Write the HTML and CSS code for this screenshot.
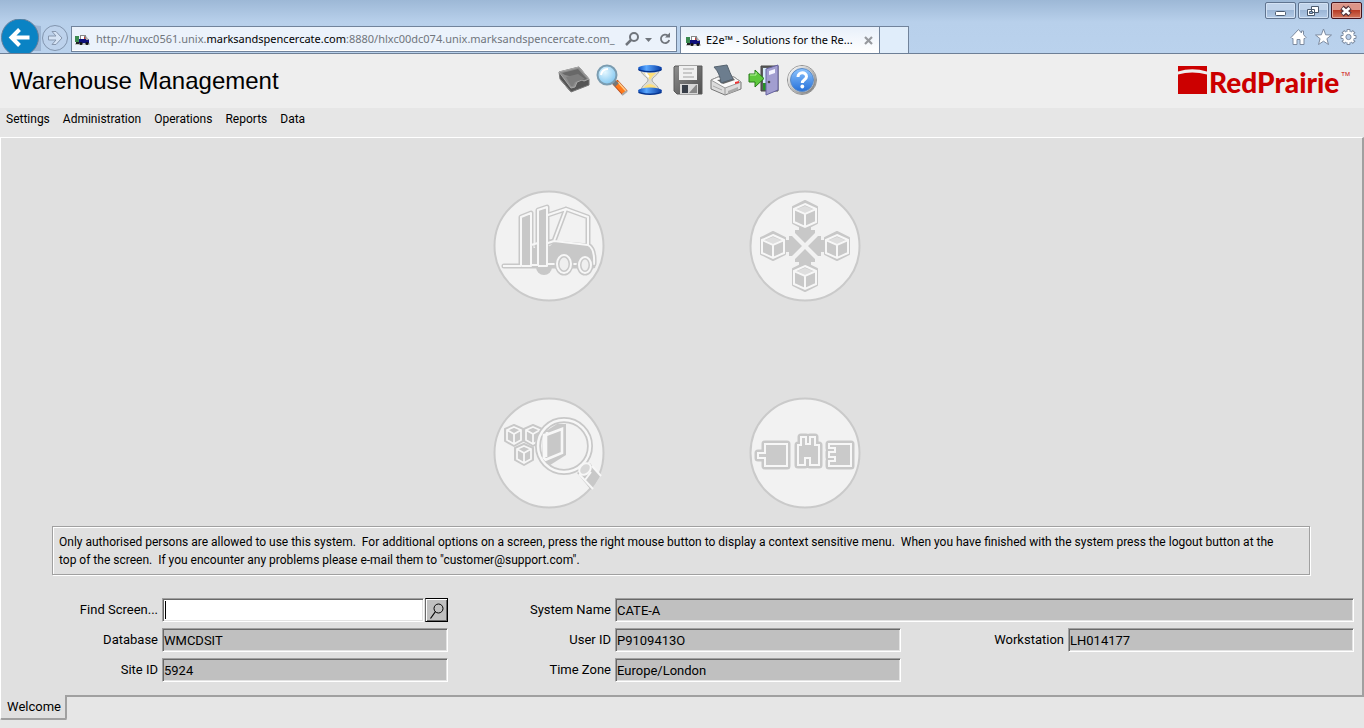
FILE: index.html
```html
<!DOCTYPE html>
<html lang="en">
<head>
<meta charset="utf-8">
<title>Warehouse Management</title>
<link rel="stylesheet" href="styles.css">
</head>
<body>
<svg class="defs" width="0" height="0" aria-hidden="true">
  <defs>
    <linearGradient id="blue" x1="0" y1="0" x2="0" y2="1"><stop offset="0" stop-color="#8cc4ff"/><stop offset="1" stop-color="#2670d8"/></linearGradient>
    <linearGradient id="cap" x1="0" y1="0" x2="1" y2="0"><stop offset="0" stop-color="#0a4ec0"/><stop offset=".35" stop-color="#5aa8ff"/><stop offset="1" stop-color="#0538a0"/></linearGradient>
    <linearGradient id="grey" x1="0" y1="0" x2="1" y2="1"><stop offset="0" stop-color="#8e8e8e"/><stop offset="1" stop-color="#4e4e4e"/></linearGradient>
    <linearGradient id="silver" x1="0" y1="0" x2="1" y2="1"><stop offset="0" stop-color="#fff"/><stop offset="1" stop-color="#777"/></linearGradient>
    <radialGradient id="lens" cx=".4" cy=".35" r=".7"><stop offset="0" stop-color="#e4f7ff"/><stop offset="1" stop-color="#7cc4f0"/></radialGradient>
    <g id="truck">
      <path d="M0 2h4v6H0z" fill="#3c8a50"/><path d="M0 10h15" stroke="#999"/><path d="M5 1h6v5H5z" fill="#888"/><path d="M6 2h3v3H6z" fill="#fff"/><path d="M9 3h1v3H9z" fill="#c33"/><path d="M4 5h10v4H4z" fill="#10107c"/><path d="M11 2l3 4h-3z" fill="#aaa"/>
      <circle cx="6" cy="9.500" r="1.600" fill="#111"/><circle cx="12" cy="9.500" r="1.600" fill="#111"/><path d="M1 8h3v2H1z" fill="#222"/>
    </g>
    <g id="cube">
      <path d="M0-14L12-8V8L0 14-12 8V-8z" fill="#c8c8c8" stroke="#c8c8c8" stroke-width="2" stroke-linejoin="round"/>
      <path d="M0-9L8-6 0-2-8-6z" fill="#dedede"/>
      <path d="M0-11L11-6V7L0 12-11 7V-6zM-11-6L0-1 11-6M0-1V12" fill="none" stroke="#f7f7f7" stroke-width="2"/>
    </g>
    <g id="smallcube">
      <path d="M0-10L9-6V6L0 11-9 6V-6z" fill="#c8c8c8" stroke="#c8c8c8" stroke-width="2" stroke-linejoin="round"/>
      <path d="M0-8L7-5V5L0 9-7 5V-5zM-7-5L0-1 7-5M0-1V9" fill="none" stroke="#f7f7f7" stroke-width="1.800"/>
    </g>
  </defs>
</svg>

<header class="chrome">
  <div class="window-controls">
    <button class="win" aria-label="Minimise"><svg width="28" height="16"><rect x="9.500" y="8.500" width="10" height="4" rx="1" fill="#fff" stroke="#4b5a6e"/></svg></button>
    <button class="win" aria-label="Restore"><svg width="28" height="16"><path d="M12.500 3.500h7v6h-7zM8.500 6.500h7v6h-7z" fill="#fff" stroke="#4b5a6e"/><path d="M10.500 8.500h3v2h-3z" fill="#8fb0d8" stroke="#4b5a6e"/></svg></button>
    <button class="win close" aria-label="Close"><svg width="28" height="16"><path d="M10 4.500l8 7M18 4.500l-8 7" stroke="#53343b" stroke-width="5"/><path d="M10.500 5l7 6M17.500 5l-7 6" stroke="#fff" stroke-width="2.600"/></svg></button>
  </div>
  <div class="nav">
    <button class="plain" aria-label="Back"><svg width="41" height="34"><path d="M25 0Q31 7 41 7V32H30z" fill="#9cb4d2"/><circle cx="20" cy="18.500" r="18.500" fill="#0a83c4" stroke="#67809c"/><path d="M29.500 18.500H12M19.500 10.500L11.500 18.500l8 8" fill="none" stroke="#fff" stroke-width="4"/></svg></button>
    <button class="plain" aria-label="Forward"><svg width="28" height="34"><circle cx="14" cy="19" r="12.500" fill="#bdd2ec" stroke="#8295ae"/><path d="M7.500 17h7.500l-4-4.500h4l6 6.500-6 6.500h-4l4-4.500H7.500z" fill="#d5e3f5" stroke="#8797ae"/></svg></button>
    <div class="address">
      <svg width="15" height="14"><use href="#truck" y="2"/></svg>
      <div class="url" role="textbox" contenteditable="true" spellcheck="false" aria-label="Address">http://huxc0561.unix.<span>marksandspencercate.com</span>:8880/hlxc00dc074.unix.marksandspencercate.com_</div>
      <button class="plain" aria-label="Search"><svg width="15" height="16"><circle cx="9" cy="6" r="4" fill="none" stroke="#70757c" stroke-width="2"/><path d="M6 9l-5 5" stroke="#70757c" stroke-width="2.500"/></svg></button>
      <button class="plain" aria-label="Show address list"><svg width="9" height="16"><path d="M1 7h7l-3.500 4z" fill="#70757c"/></svg></button>
      <button class="plain refresh" aria-label="Refresh"><svg width="12" height="16"><path d="M9 4.800A4.200 4.200 0 1 0 10.200 9" fill="none" stroke="#70757c" stroke-width="1.800"/><path d="M6 6.500h5V1.500z" fill="#70757c"/></svg></button>
    </div>
    <div class="page-tab">
      <svg width="15" height="14"><use href="#truck" y="2"/></svg>
      <span>E2e™ - Solutions for the Re...</span>
      <button class="plain" aria-label="Close tab"><svg width="9" height="9"><path d="M1 1l7 7M8 1L1 8" stroke="#96999e" stroke-width="2.200"/></svg></button>
    </div>
    <button class="new-tab" aria-label="New tab"></button>
    <div class="tools">
      <button class="plain" aria-label="Home"><svg width="17" height="18"><path d="M8.500 1.500l-7.500 8 1 1h1v6h4v-5h3v5h4v-6h1l1-1-2.500-3V3h-2v2z" fill="#fff" stroke="#7d8ba0"/></svg></button>
      <button class="plain" aria-label="Favourites"><svg width="17" height="18"><path d="M8.500 1l2.200 5.800 5.800.2-4.600 3.700 1.600 5.800-5-3.300-5 3.300 1.600-5.800L.500 7l5.800-.2z" fill="#fff" stroke="#7d8ba0"/></svg></button>
      <button class="plain" aria-label="Tools"><svg width="17" height="18" viewBox="-8.500 -9 17 18"><g fill="#fff" stroke="#7d8ba0"><path id="tooth" d="M-1.500-7.500h3v15h-3z"/><use href="#tooth" transform="rotate(45)"/><use href="#tooth" transform="rotate(90)"/><use href="#tooth" transform="rotate(135)"/></g><circle r="5.500" fill="#fff"/><circle r="2.600" fill="#bad0ec" stroke="#7d8ba0"/></svg></button>
    </div>
  </div>
</header>

<div class="banner">
  <h1>Warehouse Management</h1>
  <div class="toolbar">
    <button class="plain" aria-label="Tray"><svg width="32" height="32" viewBox="0 0 32 32"><path d="M1 8L21 3l10 12v6L13 28 2 15z" fill="#555" stroke="#777"/><path d="M1 8L21 3l10 12-5 2-2-1-5 2-2 5-4 1z" fill="#8d8d8d" stroke="#a8a8a8"/><path d="M4 9l16-4 9 10-3 1-9-3-6-1-4-1z" fill="#686868"/><path d="M8 13l12-3 7 5-4 1-6 2-2 4-2 0z" fill="#7d7d7d"/><path d="M2 15l11 13" stroke="#888"/></svg></button>
    <button class="plain" aria-label="Search"><svg width="32" height="32" viewBox="0 0 32 32"><path d="M19 18l10 11" stroke="#b8481c" stroke-width="7"/><path d="M19 18l10 11" stroke="#ff7a1c" stroke-width="5"/><path d="M22 18l8 9" stroke="#ffd08c" stroke-width="1.500"/><path d="M17 17l4 4" stroke="#777" stroke-width="5"/><path d="M26 31l5-4" stroke="#aaa" stroke-width="2"/><circle cx="11" cy="11" r="9.500" fill="url(#lens)" stroke="#7b9cb0" stroke-width="2"/><path d="M5 11q1-6 7-6" stroke="#fff" stroke-width="2" fill="none"/></svg></button>
    <button class="plain" aria-label="Wait"><svg width="32" height="32" viewBox="0 0 32 32"><path d="M7 6h18c0 5-7 7-7 10s7 5 7 11H7c0-6 7-8 7-11S7 11 7 6z" fill="#dedcd2" stroke="#a9a9a4"/><path d="M10 9h12q-4 3-6 7-2-4-6-7zM9 26q1-5 7-6 6 1 7 6z" fill="#ffe07a"/><path d="M12 8q0 3 3 5" stroke="#fff" stroke-width="2" fill="none"/><ellipse cx="16" cy="5.500" rx="12" ry="3" fill="#05348f"/><ellipse cx="16" cy="4" rx="12" ry="3" fill="url(#cap)"/><ellipse cx="16" cy="28" rx="12" ry="3" fill="#05348f"/><ellipse cx="16" cy="26.500" rx="12" ry="3" fill="url(#cap)"/></svg></button>
    <button class="plain" aria-label="Save"><svg width="32" height="32" viewBox="0 0 32 32"><path d="M3 2h27v28H5l-3-3V3z" fill="url(#grey)" stroke="#5b5b5b"/><path d="M7 2h18v14H7z" fill="#f0f0f0"/><path d="M11 5h11M11 9h9M11 13h11" stroke="#bcbcbc" stroke-width="1.500"/><path d="M8 20h18v10H8z" fill="#d6d6d6"/><path d="M10 21h6v8h-6z" fill="#383e48"/><path d="M17 29l7-8h1v8z" fill="#888"/></svg></button>
    <button class="plain" aria-label="Print"><svg width="32" height="32" viewBox="0 0 32 32"><path d="M1 16l7-3 16 0 7 5v7L15 31 1 25z" fill="#dcdcdc" stroke="#777"/><path d="M1 16l7-3h16l7 5-16 6z" fill="#fafafa" stroke="#999"/><path d="M7 16l16-2 2 2-12 4z" fill="#666"/><path d="M4 3l13-2q3 8 6 14l-12 4Q10 9 4 3z" fill="#6c7d8e" stroke="#56636f"/><path d="M15 24v7" stroke="#999"/><path d="M18 27l10-4v3l-10 4z" fill="#aaa"/><path d="M25 18l4-1v2l-4 1z" fill="#e33"/><path d="M3 22l9 4" stroke="#aaa"/></svg></button>
    <button class="plain" aria-label="Log out"><svg width="32" height="32" viewBox="0 0 32 32"><path d="M13 2h17v25H13z" fill="#5c5c5c" stroke="#444"/><path d="M15 4h11v15H15z" fill="#d7eefa"/><path d="M15 19h9v7h-9z" fill="#249224"/><path d="M18 5l12-4v25l-12 5z" fill="#a29ed0" stroke="#6662a0"/><path d="M21 7l6-2v4l-6 2z" fill="#f4f4ff"/><circle cx="21" cy="18" r="1.300" fill="#444"/><path d="M1 10h6V6l9 8.500-9 8.500v-5H1z" fill="#5ec83c" stroke="#267b18"/><path d="M2 11h6V8" stroke="#b5f39a" fill="none"/></svg></button>
    <button class="plain" aria-label="Help"><svg width="32" height="32" viewBox="0 0 32 32"><circle cx="16" cy="16" r="14.500" fill="#e9e9e9" stroke="#8f8f8f"/><circle cx="16" cy="16" r="13" fill="none" stroke="url(#silver)" stroke-width="2"/><circle cx="16" cy="16" r="11.500" fill="url(#blue)" stroke="#5c8ac4"/><path d="M12 13c0-5.500 8.500-5.500 8.500-.5 0 3.500-4.200 3-4.200 6.500" fill="none" stroke="#fff" stroke-width="3"/><circle cx="16.300" cy="22.500" r="1.900" fill="#fff"/></svg></button>
  </div>
  <div class="brand">
    <svg width="29" height="30"><path d="M0 0h29v5.500Q14 1 0 5.500z" fill="#c00"/><path d="M0 8.500q14-4 29 0V28H0z" fill="#c00"/></svg>
    <span class="brand-name">RedPrairie</span><span class="tm">TM</span>
  </div>
</div>

<nav class="menu">
  <button>Settings</button><button>Administration</button><button>Operations</button><button>Reports</button><button>Data</button>
</nav>

<main class="panel">
  <div class="art">
    <svg viewBox="0 0 112 112">
      <circle cx="56" cy="56" r="54.500" fill="#f2f2f2" stroke="#cacaca" stroke-width="2"/>
      <circle cx="51" cy="77" r="8" fill="#c8c8c8"/>
      <path d="M11 76h17V27l10-4v53M45 76V20l9-3v59M28 76h72M55 25l18-6 22 8v28q7 4 6 19M73 19L61 51l-17 5M61 53l34 3" fill="none" stroke="#c8c8c8" stroke-width="5" stroke-linejoin="round" stroke-linecap="round"/>
      <path d="M38 58h16l7-5 34 3q7 4 6 18H38z" fill="#c8c8c8"/>
      <path d="M28 27l10-4v53H28zM45 20l9-3v59h-9z" fill="#c8c8c8"/>
      <path d="M10 76h18V27l10-4v53h-9M38 55l7-2M38 75h7V20l9-3v59h-9M54 74h47q1-15-6-19V27l-22-8-18 6M73 19L61 51l-6 2M61 51l34 4" fill="none" stroke="#f7f7f7" stroke-width="2" stroke-linejoin="round"/>
      <g fill="#efefef" stroke="#c8c8c8" stroke-width="5"><ellipse cx="71" cy="74" rx="7" ry="9"/><ellipse cx="92" cy="75" rx="6" ry="8"/></g>
      <g fill="none" stroke="#f7f7f7" stroke-width="2"><ellipse cx="71" cy="74" rx="7" ry="9"/><ellipse cx="92" cy="75" rx="6" ry="8"/></g>
    </svg>
    <svg viewBox="0 0 112 112">
      <circle cx="56" cy="56" r="54.500" fill="#f2f2f2" stroke="#cacaca" stroke-width="2"/>
      <path id="arrow" d="M56 53l-10-10v-3h4v-5h12v5h4v3z" fill="#c8c8c8"/>
      <use href="#arrow" transform="rotate(90 56 56)"/><use href="#arrow" transform="rotate(180 56 56)"/><use href="#arrow" transform="rotate(270 56 56)"/>
      <use href="#cube" x="56" y="25"/><use href="#cube" x="24" y="56"/><use href="#cube" x="88" y="56"/><use href="#cube" x="56" y="87"/>
    </svg>
    <svg viewBox="0 0 112 112">
      <circle cx="56" cy="56" r="54.500" fill="#f2f2f2" stroke="#cacaca" stroke-width="2"/>
      <use href="#smallcube" x="21" y="38"/><use href="#smallcube" x="40" y="38"/><use href="#smallcube" x="31" y="57"/>
      <path d="M84 76l14 17 9-14-10-13z" fill="#c8c8c8"/>
      <circle cx="71" cy="49" r="26" fill="#f2f2f2" stroke="#c8c8c8" stroke-width="6"/>
      <path d="M50 36l14-9h9v31L54 70l-5-2z" fill="#c8c8c8"/>
      <circle cx="71" cy="49" r="26" fill="none" stroke="#f7f7f7" stroke-width="2.500"/>
      <path d="M51 61V38l4-1M53 60V38l16-6v24L52 63M54 37V35M50 60l3 3" fill="none" stroke="#f7f7f7" stroke-width="2.600"/>
      <path d="M86 77l14 15M99 69l9 10M92 83l6-8" stroke="#f7f7f7" stroke-width="2"/>
      <ellipse cx="92" cy="72" rx="5" ry="6.500" transform="rotate(45 92 72)" fill="#d8d8d8" stroke="#f7f7f7" stroke-width="2"/>
    </svg>
    <svg viewBox="0 0 112 112">
      <circle cx="56" cy="56" r="54.500" fill="#f2f2f2" stroke="#cacaca" stroke-width="2"/>
      <path d="M16 47h22v22H16v-8H9v-5h7zM49 48h3v-8h5v7h4v-7h5v8h4v20H61v-7h-5v7h-7zM80 47h22v22H80v-5h6v-4h-6v-5h6v-4h-6z" fill="#cacaca" stroke="#c8c8c8" stroke-width="7" stroke-linejoin="round"/>
      <path d="M16 47h22v22H16v-8H9v-5h7zM49 48h3v-8h5v7h4v-7h5v8h4v20H61v-7h-5v7h-7zM80 47h22v22H80v-5h6v-4h-6v-5h6v-4h-6z" fill="#cacaca" stroke="#f7f7f7" stroke-width="2"/>
    </svg>
  </div>

  <p class="notice">Only authorised persons are allowed to use this system.&nbsp; For additional options on a screen, press the right mouse button to display a context sensitive menu.&nbsp; When you have finished with the system press the logout button at the top of the screen.&nbsp; If you encounter any problems please e-mail them to "customer@support.com".</p>

  <form class="fields">
    <label for="find">Find Screen...</label>
    <div class="find"><input id="find" class="field editable" type="text"><button type="button" aria-label="Find"><svg width="19" height="19"><circle cx="11.500" cy="7.500" r="4.500" fill="none" stroke="#000"/><path d="M8.500 10.500l-5 7" stroke="#000" stroke-width="1.200"/></svg></button></div>
    <label for="system">System Name</label>
    <input id="system" class="field wide" type="text" value="CATE-A" readonly>
    <label for="database">Database</label>
    <input id="database" class="field" type="text" value="WMCDSIT" readonly>
    <label for="user">User ID</label>
    <input id="user" class="field" type="text" value="P9109413O" readonly>
    <label for="station">Workstation</label>
    <input id="station" class="field" type="text" value="LH014177" readonly>
    <label for="site">Site ID</label>
    <input id="site" class="field" type="text" value="5924" readonly>
    <label for="zone">Time Zone</label>
    <input id="zone" class="field" type="text" value="Europe/London" readonly>
  </form>
</main>
<footer><button class="screen-tab">Welcome</button></footer>
</body>
</html>
```
FILE: styles.css
```css
* { box-sizing: border-box; }
body {
  margin: 0;
  min-height: 100vh;
  display: flex;
  flex-direction: column;
  background: #e6e6e6;
  color: #000;
  font: 13px/18px Roboto, "Liberation Sans", Arial, sans-serif;
}
button, input { font: inherit; color: inherit; }
svg { display: block; flex: none; }
.defs { position: absolute; }
.plain { border: 0; padding: 0; background: none; }

.chrome {
  background: linear-gradient(#9db8d6, #b8d0eb 22px, #bad2ed);
  border-bottom: 1px solid #6d7f96;
  font: 11px/16px "Noto Sans", "Open Sans", sans-serif;
}
.window-controls {
  height: 18px;
  padding: 2px 2px 0 0;
  display: flex;
  justify-content: flex-end;
  gap: 2px;
}
.win {
  width: 31px;
  height: 17px;
  padding: 0;
  border: 1px solid #60748f;
  border-radius: 2px;
  box-shadow: inset 0 0 0 1px #d3e2f4;
  background: linear-gradient(#c0d3ea 50%, #9cb6d6 50%, #b2cae6);
}
.close {
  border-color: #45131c;
  box-shadow: inset 0 0 0 1px #e0a79d;
  background: linear-gradient(#dc9588 45%, #b83c26 50%, #d2765c);
}
.nav { display: flex; align-items: flex-end; height: 35px; }
.address {
  flex: 0 1 606px;
  min-width: 0;
  height: 26px;
  margin: 0 3px 1px 2px;
  padding: 0 5px 0 3px;
  display: flex;
  align-items: center;
  border: 1px solid #71839b;
  box-shadow: inset 0 -1px #fff;
  background: #ebf2fb;
  color: #70757c;
}
.url { flex: 1; min-width: 0; margin-left: 6px; overflow: hidden; white-space: nowrap; }
.url span { color: #000; }
.address .plain { margin-left: 4px; }
.address .refresh { margin-left: 6px; }
.page-tab {
  flex: 0 1 200px;
  height: 27px;
  padding: 0 6px 0 5px;
  display: flex;
  align-items: center;
  gap: 5px;
  border: 1px solid #71839b;
  border-bottom: 0;
  background: linear-gradient(#e8f0fa, #fff);
}
.page-tab span { flex: 1; white-space: nowrap; }
.new-tab {
  width: 29px;
  height: 27px;
  border: 1px solid #71839b;
  border-width: 1px 1px 0 0;
  background: #e0edfa;
}
.tools { margin-left: auto; padding: 0 7px 7px 0; display: flex; gap: 8px; }

.banner {
  min-height: 54px;
  padding: 0 14px 0 10px;
  display: grid;
  grid-template-columns: 1fr auto 1fr;
  align-items: center;
  background: #eee;
}
h1 { margin: 0; font: 24px/28px "Liberation Sans", Arial, sans-serif; }
.toolbar { display: flex; gap: 6px; margin-left: 16px; padding-bottom: 2px; }
.brand { justify-self: end; display: flex; align-items: center; gap: 2px; color: #c00; }
.brand-name { padding-top: 2px; font: 900 28px/32px Lato, sans-serif; }
.tm { align-self: flex-start; font: 6px/20px "Liberation Sans", sans-serif; }

.menu { height: 29px; padding: 2px 6px; display: flex; gap: 13px; font-size: 12px; }
.menu button { border: 0; padding: 0; background: none; align-self: flex-start; }

.panel {
  flex: 1;
  display: flex;
  flex-direction: column;
  padding-bottom: 13px;
  background: #e0e0e0;
  border: solid #a0a0a0;
  border-width: 1px 2px 2px 1px;
  border-top-color: #fff;
  border-left-color: #fff;
}
.art {
  flex: 1;
  display: grid;
  grid-template-columns: 112px 112px;
  grid-auto-rows: 112px;
  gap: 95px 144px;
  justify-content: center;
  padding: 52px 10px 0 0;
}
.notice {
  margin: 0 52px 23px 51px;
  padding: 6px 24px 5px 6px;
  font-size: 12px;
  border: 1px solid #a0a0a0;
  box-shadow: inset 1px 1px #fff, 1px 1px #fff;
}
.fields {
  display: grid;
  grid-template-columns: 157px 1fr 159px 1fr 159px 1fr;
  gap: 6px 4px;
  align-items: center;
  padding-right: 8px;
}
.fields label { text-align: right; }
.field {
  width: 100%;
  min-width: 0;
  height: 24px;
  padding: 0 1px;
  border: 1px solid #a0a0a0;
  border-right-color: #fff;
  border-bottom-color: #fff;
  border-radius: 0;
  box-shadow: inset 1px 1px #696969, inset -1px -1px #e3e3e3;
  background: #c0c0c0;
  outline: 0;
}
.wide { grid-column: span 3; }
.find { display: flex; gap: 1px; }
.editable { background: linear-gradient(#000, #000) 2px 2px / 1px 18px no-repeat #fff; }
.find button {
  flex: none;
  width: 23px;
  height: 24px;
  padding: 1px;
  border: 1px solid #000;
  border-left-color: #696969;
  box-shadow: inset 1px 1px #fff, inset -1px -1px #696969;
  background: #c0c0c0;
}
label[for="database"], label[for="site"] { grid-column-start: 1; }

footer { height: 31px; }
.screen-tab {
  height: 25px;
  min-width: 67px;
  margin-top: -2px;
  padding: 0 4px 0 6px;
  display: block;
  position: relative;
  border: solid #a0a0a0;
  border-width: 0 2px 2px 1px;
  border-left-color: #fff;
  border-radius: 0 0 2px 2px;
  background: #e0e0e0;
}
```
